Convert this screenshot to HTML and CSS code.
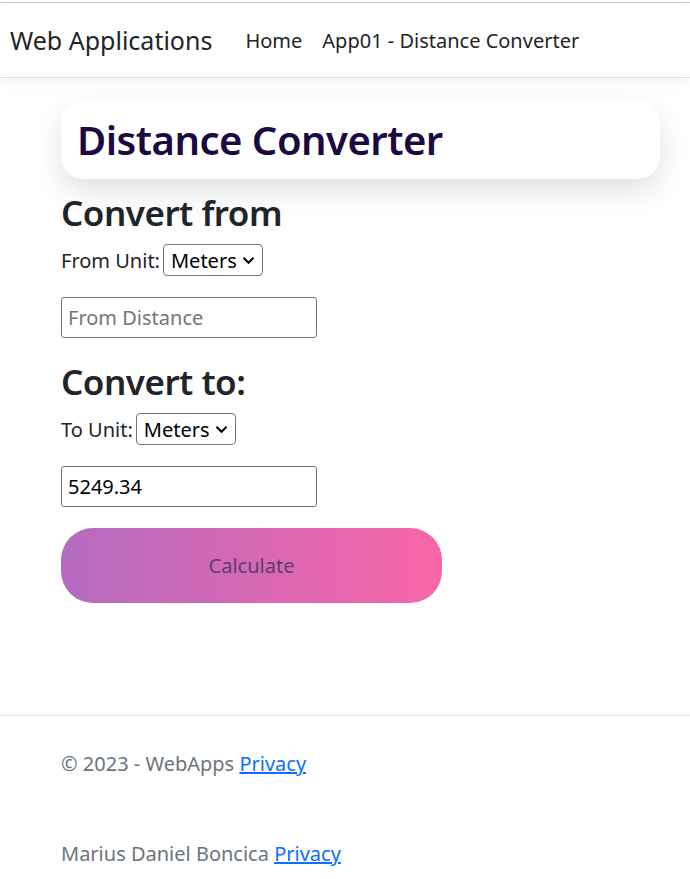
FILE: index.html
```html
<!DOCTYPE html>
<html lang="en">
<head>
<meta charset="utf-8">
<title>Distance Converter - WebApps</title>
<link rel="stylesheet" href="styles.css">
</head>
<body>
<header class="site-header">
  <nav class="navbar">
    <a class="brand" href="#">Web Applications</a>
    <ul class="nav-links">
      <li><a href="#">Home</a></li>
      <li><a href="#">App01 - Distance Converter</a></li>
    </ul>
  </nav>
</header>
<main class="container">
  <div class="title-card"><h1>Distance Converter</h1></div>
  <section class="group">
    <h2>Convert from</h2>
    <div class="unit-row">
      <label for="fromUnit">From Unit:</label>
      <select id="fromUnit" class="unit-select"><option>Meters</option><option>Kilometers</option><option>Feet</option><option>Miles</option></select>
    </div>
    <input class="distance" type="text" placeholder="From Distance">
  </section>
  <section class="group">
    <h2>Convert to:</h2>
    <div class="unit-row">
      <label for="toUnit">To Unit:</label>
      <select id="toUnit" class="unit-select"><option>Meters</option><option>Kilometers</option><option>Feet</option><option>Miles</option></select>
    </div>
    <input class="distance" type="text" value="5249.34">
  </section>
  <button class="calc-btn" type="button">Calculate</button>
</main>
<footer class="site-footer">
  <div class="container">
    <p class="foot-line">© 2023 - WebApps <a href="#">Privacy</a></p>
    <p class="foot-line">Marius Daniel Boncica <a href="#">Privacy</a></p>
  </div>
</footer>
</body>
</html>
```
FILE: styles.css
```css
* { box-sizing: border-box; }
html, body { margin: 0; padding: 0; }
body {
  font-family: "Noto Sans", "Open Sans", sans-serif;
  font-size: 20px;
  color: #212529;
  background: #fff;
}
.site-header {
  padding-top: 2px;
}
.navbar {
  display: flex;
  align-items: center;
  height: 76px;
  border-top: 1px solid #c6c6c6;
  border-bottom: 1px solid #dedede;
  box-shadow: 0 5px 15px rgba(0,0,0,0.05);
  padding-left: 10px;
}
.brand {
  font-size: 25px;
  color: #212529;
  text-decoration: none;
  margin-right: 23px;
}
.nav-links {
  display: flex;
  list-style: none;
  margin: 0;
  padding: 0;
}
.nav-links a {
  display: block;
  padding: 0 10px;
  color: #212529;
  text-decoration: none;
  font-size: 20px;
}
.container {
  padding-left: 61px;
  padding-right: 30px;
}
main.container {
  padding-top: 22px;
  min-height: 637px;
}
.title-card {
  background: #fff;
  border-radius: 22px;
  box-shadow: 0 12px 30px rgba(0,0,0,0.12);
  height: 79px;
  padding: 0 16px;
  display: flex;
  align-items: center;
}
h1 {
  margin: 0;
  font-size: 40px;
  letter-spacing: -0.5px;
  font-weight: 600;
  color: #1b0942;
  line-height: 1.2;
}
h2 {
  margin: 13px 0 10px;
  font-size: 35px;
  letter-spacing: -0.5px;
  font-weight: 600;
  line-height: 1.2;
  color: #212529;
}
.group + .group h2 { margin-top: 23px; }
.unit-row {
  display: flex;
  align-items: center;
  gap: 3px;
  height: 32px;
  margin-bottom: 21px;
}
.unit-select {
  appearance: none;
  -webkit-appearance: none;
  font-family: inherit;
  font-size: 20px;
  color: #000;
  height: 32px;
  width: 100px;
  padding: 0 24px 0 7px;
  border: 1px solid #767676;
  border-radius: 4px;
  background: #fff url("data:image/svg+xml,%3Csvg xmlns='http://www.w3.org/2000/svg' width='13' height='9' viewBox='0 0 13 9'%3E%3Cpath d='M1.5 1.8 L6.5 6.8 L11.5 1.8' fill='none' stroke='%23000' stroke-width='2'/%3E%3C/svg%3E") no-repeat right 7px center;
}
.distance {
  display: block;
  width: 256px;
  height: 41px;
  font-family: inherit;
  font-size: 20px;
  color: #000;
  padding: 0 6px;
  border: 1px solid #767676;
  border-radius: 3px;
}
.distance::placeholder { color: #757575; }
.calc-btn {
  display: block;
  margin-top: 21px;
  width: 381px;
  height: 75px;
  border: none;
  border-radius: 32px;
  background: linear-gradient(90deg, #b36bc0 0%, #f966a7 100%);
  color: #5e3b73;
  font-family: inherit;
  font-size: 20px;
}
.site-footer {
  border-top: 1px solid #dee2e6;
  color: #6c757d;
}
.foot-line {
  margin: 0;
  line-height: 30px;
}
.foot-line:first-child { margin-top: 33px; }
.foot-line + .foot-line { margin-top: 60px; }
.foot-line a { color: #0d6efd; }
```
